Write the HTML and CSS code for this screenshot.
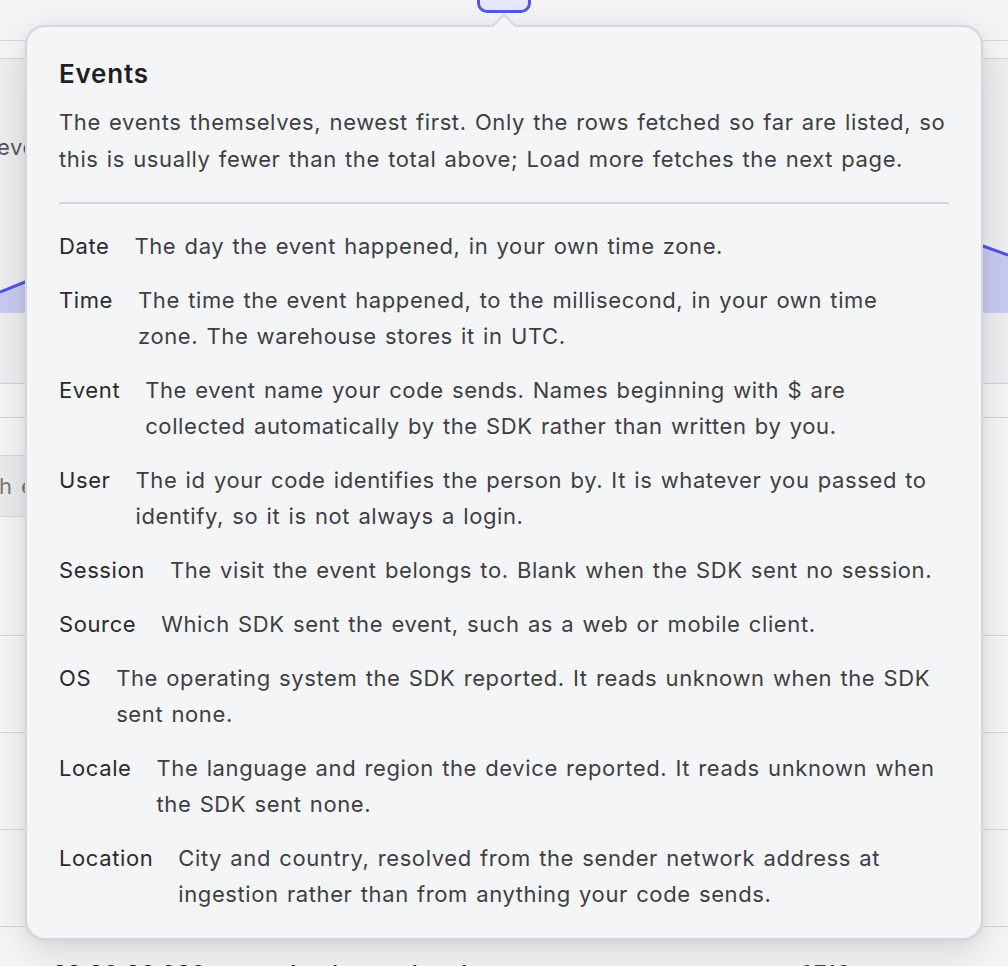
FILE: index.html
```html
<!DOCTYPE html>
<html lang="en">
<head>
<meta charset="utf-8">
<title>Events</title>
<link rel="stylesheet" href="styles.css">
</head>
<body>
<div class="app">
  <div class="toolbar">
    <button class="info-btn" aria-label="About this section"></button>
  </div>
  <section class="panel">
    <div class="panel-head"></div>
    <div class="chart-section">
      <div class="chart-title">Total events</div>
      <svg class="chart" viewBox="0 0 1008 100" width="1008" height="100" preserveAspectRatio="none" aria-hidden="true">
        <path class="chart-fill" d="M0 79 L25 69 C 200 30, 380 60, 500 34 S 820 12, 983 33 L1008 42 L1008 100 L0 100 Z"/>
        <path class="chart-line" d="M0 79 L25 69 C 200 30, 380 60, 500 34 S 820 12, 983 33 L1008 42"/>
      </svg>
    </div>
    <div class="row row-short"></div>
    <div class="row row-search">
      <div class="search">Search events</div>
    </div>
    <div class="row row-event"></div>
    <div class="row row-event"></div>
    <div class="row row-event"></div>
    <div class="row row-last">
      <span class="cell cell-time">22:20:26.020</span>
      <span class="cell cell-name">upload_completed</span>
      <span class="cell cell-id">0713</span>
    </div>
  </section>

  <div class="popover" role="dialog" aria-labelledby="pop-title">
    <h2 id="pop-title" class="pop-title">Events</h2>
    <p class="pop-intro">The events themselves, newest first. Only the rows fetched so far are listed, so this is usually fewer than the total above; Load more fetches the next page.</p>
    <hr class="pop-rule">
    <dl class="defs">
      <div class="def"><dt>Date</dt><dd>The day the event happened, in your own time zone.</dd></div>
      <div class="def"><dt>Time</dt><dd>The time the event happened, to the millisecond, in your own time zone. The warehouse stores it in UTC.</dd></div>
      <div class="def"><dt>Event</dt><dd>The event name your code sends. Names beginning with $ are collected automatically by the SDK rather than written by you.</dd></div>
      <div class="def"><dt>User</dt><dd>The id your code identifies the person by. It is whatever you passed to identify, so it is not always a login.</dd></div>
      <div class="def"><dt>Session</dt><dd>The visit the event belongs to. Blank when the SDK sent no session.</dd></div>
      <div class="def"><dt>Source</dt><dd>Which SDK sent the event, such as a web or mobile client.</dd></div>
      <div class="def"><dt>OS</dt><dd>The operating system the SDK reported. It reads unknown when the SDK sent none.</dd></div>
      <div class="def"><dt>Locale</dt><dd>The language and region the device reported. It reads unknown when the SDK sent none.</dd></div>
      <div class="def"><dt>Location</dt><dd>City and country, resolved from the sender network address at ingestion rather than from anything your code sends.</dd></div>
    </dl>
  </div>
</div>
</body>
</html>
```

FILE: styles.css
```css
* { box-sizing: border-box; }

html, body {
  margin: 0;
  padding: 0;
}

body {
  width: 1008px;
  height: 966px;
  overflow: hidden;
  background: #f4f4f6;
  font-family: Inter, "Noto Sans", "Liberation Sans", sans-serif;
  font-size: 22px;
  letter-spacing: 0.6px;
  word-spacing: 1.5px;
  color: #3e3e43;
}

.app {
  position: relative;
  width: 1008px;
  height: 966px;
  overflow: hidden;
}

/* ---------- background page ---------- */

.toolbar {
  height: 40px;
  display: flex;
  justify-content: center;
  align-items: flex-start;
}

.info-btn {
  display: block;
  width: 54px;
  height: 34px;
  margin: -21px 0 0 0;
  padding: 0;
  border: 3px solid #5158e8;
  border-radius: 10px;
  background: #e7e8fb;
}

.panel {
  background: #f6f6f7;
  border-top: 1px solid #d6d6da;
}

.panel-head {
  height: 18px;
  background: #f6f6f7;
  border-bottom: 1px solid #d6d6da;
}

.chart-section {
  height: 325px;
  padding-top: 70px;
  background: #efeff1;
  border-bottom: 1px solid #d6d6da;
}

.chart-title {
  margin-left: -65px;
  line-height: 36px;
  color: #56565b;
}

.chart {
  display: block;
  margin-top: 48px;
}

.chart-fill { fill: #c9cbf1; }
.chart-line { fill: none; stroke: #4f56e7; stroke-width: 3; }

.row {
  border-bottom: 1px solid #d6d6da;
  background: #f6f6f7;
}

.row-short { height: 34px; }

.row-search {
  height: 218px;
  padding-top: 37px;
}

.search {
  width: 360px;
  height: 62px;
  margin-left: -85px;
  padding-left: 20px;
  border: 1px solid #d6d6da;
  border-radius: 8px;
  background: #ececee;
  color: #77777c;
  line-height: 60px;
}

.row-event { height: 97px; }

.row-last {
  height: 80px;
  padding: 28px 0 0 53px;
  display: flex;
  border-bottom: none;
  line-height: 36px;
  color: #1e1e21;
}

.cell-time { width: 209px; font-weight: 600; }
.cell-name { width: 538px; font-weight: 600; }
.cell-id { color: #3e3e43; }

/* ---------- popover ---------- */

.popover {
  position: absolute;
  left: 25px;
  top: 25px;
  width: 958px;
  padding: 31px 32px 26px 32px;
  background: #f4f5f7;
  border: 2px solid #d6d6da;
  border-radius: 20px;
  box-shadow: 0 14px 44px rgba(0, 0, 0, 0.13), 0 2px 8px rgba(0, 0, 0, 0.06);
}

.popover::before {
  content: "";
  position: absolute;
  top: -10px;
  left: 468px;
  width: 16px;
  height: 16px;
  background: #f4f5f7;
  border-top: 2px solid #d6d6da;
  border-left: 2px solid #d6d6da;
  transform: rotate(45deg);
}

.pop-title {
  margin: 0;
  font-size: 26px;
  line-height: 32px;
  font-weight: 600;
  letter-spacing: 0.8px;
  color: #1f1f23;
}

.pop-intro {
  margin: 14px 0 0 0;
  line-height: 37px;
  color: #3e3e43;
}

.pop-rule {
  margin: 24px 0 0 0;
  height: 2px;
  border: none;
  background: #d4d4d8;
}

.defs {
  margin: 24px 0 0 0;
  padding-right: 6px;
  display: flex;
  flex-direction: column;
  gap: 18px;
}

.def {
  display: flex;
  gap: 25px;
  line-height: 36px;
}

.def dt {
  white-space: nowrap;
  color: #2a2a2e;
}

.def dd {
  margin: 0;
  flex: 1;
  color: #3e3e43;
}
```
